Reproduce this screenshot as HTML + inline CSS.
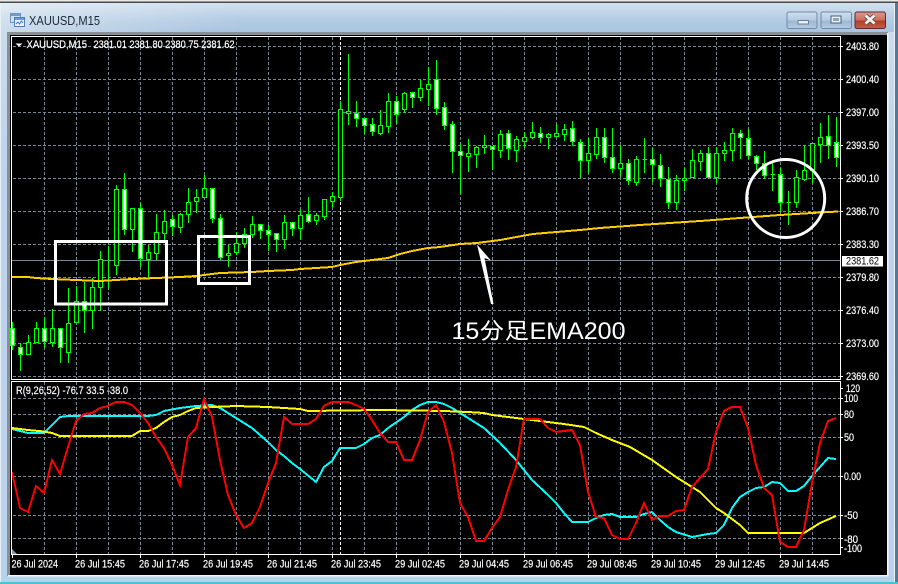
<!DOCTYPE html>
<html lang="ja">
<head>
<meta charset="utf-8">
<title>XAUUSD,M15</title>
<style>
html,body{margin:0;padding:0;width:898px;height:584px;overflow:hidden;background:#b9d2ec}
svg{display:block;position:absolute;left:0;top:0}
.t{font-family:"Liberation Sans",sans-serif;font-size:11px;fill:#fff;stroke:#fff;stroke-width:.2}
</style>
</head>
<body>
<svg width="898" height="584" viewBox="0 0 898 584" xmlns="http://www.w3.org/2000/svg">
<defs>
<linearGradient id="tb" x1="0" y1="0" x2="0" y2="1"><stop offset="0" stop-color="#d3e2f0"/><stop offset=".55" stop-color="#b6cde4"/><stop offset="1" stop-color="#a9c4df"/></linearGradient>
<linearGradient id="tl" x1="0" y1="0" x2="1" y2="0"><stop offset="0" stop-color="#fff" stop-opacity=".4"/><stop offset="1" stop-color="#fff" stop-opacity="0"/></linearGradient>
<linearGradient id="lf" x1="0" y1="0" x2="0" y2="1"><stop offset="0" stop-color="#cfdeee"/><stop offset=".3" stop-color="#bcd3eb"/><stop offset="1" stop-color="#b9d2ec"/></linearGradient>
<linearGradient id="bn" x1="0" y1="0" x2="0" y2="1"><stop offset="0" stop-color="#cfdff0"/><stop offset=".5" stop-color="#b3cae1"/><stop offset=".55" stop-color="#9db7d2"/><stop offset="1" stop-color="#b5cde3"/></linearGradient>
<linearGradient id="bc" x1="0" y1="0" x2="0" y2="1"><stop offset="0" stop-color="#dd9a8c"/><stop offset=".48" stop-color="#c9705e"/><stop offset=".55" stop-color="#b43c28"/><stop offset="1" stop-color="#c8604a"/></linearGradient>
</defs>

<!-- window frame -->
<rect width="898" height="584" fill="url(#lf)"/>
<rect x="0" y="2" width="898" height="30" fill="url(#tb)"/>
<rect x="0" y="2" width="240" height="30" fill="url(#tl)"/>
<rect x="0" y="0" width="898" height="2" fill="#e8e8e8"/>
<rect x="0" y="1.500" width="898" height="1.500" fill="#4a4a4a"/>
<rect x="0" y="3" width="1" height="581" fill="#e6eef6"/>
<rect x="895" y="3" width="3" height="581" fill="#5d7690"/>
<rect x="894" y="3" width="1" height="581" fill="#e8f0f8"/>
<rect x="0" y="582" width="898" height="2" fill="#4fbfd8"/>

<!-- title -->
<g>
<rect x="10.500" y="13.500" width="10" height="9" fill="#cfe0f2" stroke="#6f93bd"/>
<rect x="14.500" y="17.500" width="10" height="9" fill="#eaf3fb" stroke="#4e7fb8"/>
<rect x="11" y="14" width="9" height="2" fill="#6f9ad0"/>
<rect x="15" y="18" width="9" height="2" fill="#6f9ad0"/>
<path d="M16 24l2-2 1.500 2 2-3 1.500 2" fill="none" stroke="#3f78b8"/>
</g>
<text x="29" y="25" font-family="'Liberation Sans',sans-serif" font-size="12.500" fill="#1c2a38" textLength="71" lengthAdjust="spacingAndGlyphs">XAUUSD,M15</text>

<!-- window buttons -->
<rect x="787" y="12" width="30" height="16.500" rx="2" fill="url(#bn)" stroke="#7189a4"/>
<rect x="798" y="20.500" width="10.500" height="3.500" fill="#e9eff5" stroke="#6a7f96"/>
<rect x="821" y="12" width="30.500" height="16.500" rx="2" fill="url(#bn)" stroke="#7189a4"/>
<rect x="831" y="16" width="10" height="7" fill="#e9eff5" stroke="#4d6178"/>
<rect x="833" y="18" width="6" height="3" fill="#8ea7c0"/>
<rect x="855" y="12" width="30.500" height="16.500" rx="2" fill="url(#bc)" stroke="#5b2a35"/>
<path d="M865.500 15.500l9 8M874.500 15.500l-9 8" stroke="#5a4a48" stroke-width="4.500" fill="none"/>
<path d="M865.500 15.500l9 8M874.500 15.500l-9 8" stroke="#f3f1ef" stroke-width="2.800" fill="none"/>

<!-- client -->
<rect x="7" y="32" width="881" height="544" fill="#8a8f95"/>
<rect x="10" y="35" width="877" height="540" fill="#000"/>
<rect x="8" y="575" width="880" height="1.500" fill="#f2f6fa"/>
<rect x="887" y="33" width="1.500" height="543" fill="#f2f6fa"/>

<!-- grid -->
<path shape-rendering="crispEdges" stroke="#778899" stroke-width="1" stroke-dasharray="3 2" fill="none" d="M13 46.500H840M13 79.500H840M13 112.500H840M13 145.500H840M13 178.500H840M13 211.500H840M13 244.500H840M13 277.500H840M13 310.500H840M13 343.500H840M13 376.500H840M13 398.500H840M13 414.500H840M13 437.500H840M13 476.500H840M13 515.500H840M13 538.500H840
M44.500 37V379M76.500 37V379M108.500 37V379M140.500 37V379M172.500 37V379M204.500 37V379M236.500 37V379M268.500 37V379M300.500 37V379M332.500 37V379M364.500 37V379M396.500 37V379M428.500 37V379M460.500 37V379M492.500 37V379M524.500 37V379M556.500 37V379M588.500 37V379M620.500 37V379M652.500 37V379M684.500 37V379M716.500 37V379M748.500 37V379M780.500 37V379M812.500 37V379
M44.500 382V554M76.500 382V554M108.500 382V554M140.500 382V554M172.500 382V554M204.500 382V554M236.500 382V554M268.500 382V554M300.500 382V554M332.500 382V554M364.500 382V554M396.500 382V554M428.500 382V554M460.500 382V554M492.500 382V554M524.500 382V554M556.500 382V554M588.500 382V554M620.500 382V554M652.500 382V554M684.500 382V554M716.500 382V554M748.500 382V554M780.500 382V554M812.500 382V554"/>
<path shape-rendering="crispEdges" stroke="#fff" stroke-width="1" stroke-dasharray="3 2" fill="none" d="M340.500 37V379M340.500 382V554"/>

<!-- current price line -->
<path shape-rendering="crispEdges" stroke="#778899" d="M12 260.500H840" fill="none"/>

<!-- wicks -->
<path shape-rendering="crispEdges" stroke="#0f0" stroke-width="1" fill="none" d="M12.500 322V350M20.500 343V371M28.500 335V354M36.500 322V342M44.500 317V348M52.500 309V347M60.500 328V363M68.500 288V363M76.500 286V323M84.500 282V333M92.500 278V329M100.500 251V311M108.500 246V289M116.500 185V275M124.500 173V235M132.500 208V252M140.500 203V267M148.500 245V277M156.500 214V260M164.500 210V242M172.500 215V236M180.500 213V233M188.500 188V223M196.500 189V213M204.500 175V197M212.500 188V223M220.500 214V260M228.500 245V267M236.500 232V255M244.500 228V248M252.500 216V238M260.500 224V239M268.500 225V251M276.500 233V252M284.500 215V249M292.500 222V236M300.500 209V240M308.500 197V223M316.500 213V225M324.500 199V220M332.500 192V207M340.500 101V201M348.500 54V125M356.500 101V127M364.500 118V134M372.500 118V136M380.500 110V135M388.500 93V133M396.500 96V124M404.500 92V113M412.500 92V108M420.500 80V101M428.500 67V106M436.500 60V115M444.500 102V130M452.500 121V173M460.500 143V194M468.500 139V172M476.500 146V168M484.500 135V154M492.500 146V170M500.500 130V158M508.500 130V160M516.500 136V162M524.500 132V148M532.500 122V139M540.500 127V143M548.500 133V149M556.500 124V137M564.500 124V141M572.500 121V146M580.500 139V178M588.500 138V173M596.500 128V159M604.500 128V163M612.500 128V173M620.500 145V177M628.500 159V185M636.500 156V186M644.500 138V173M652.500 148V182M660.500 154V187M668.500 167V209M676.500 175V210M684.500 168V191M692.500 149V177M700.500 150V171M708.500 147V177M716.500 147V183M724.500 142V161M732.500 128V161M740.500 130V159M748.500 129V159M756.500 155V170M764.500 151V179M772.500 163V191M780.500 168V212M788.500 191V225M796.500 170V208M804.500 145V181M812.500 143V183M820.500 123V163M828.500 115V159M836.500 117V167
M106.500 280.500H111M642.500 159.500H647M770.500 174.500H775M786.500 202.500H791"/>

<!-- hollow (up) bodies -->
<path shape-rendering="crispEdges" stroke="#0f0" stroke-width="1" fill="#000" d="M26.500 342.500h4v12h-4zM34.500 328.500h4v14h-4zM50.500 328.500h4v14h-4zM66.500 323.500h4v29h-4zM74.500 301.500h4v21h-4zM90.500 287.500h4v23h-4zM98.500 259.500h4v28h-4zM114.500 189.500h4v76h-4zM130.500 208.500h4v21h-4zM146.500 252.500h4v7h-4zM154.500 232.500h4v21h-4zM162.500 221.500h4v12h-4zM178.500 214.500h4v13h-4zM186.500 202.500h4v12h-4zM194.500 197.500h4v4h-4zM202.500 188.500h4v9h-4zM226.500 253.500h4v2h-4zM234.500 243.500h4v9h-4zM242.500 234.500h4v9h-4zM250.500 224.500h4v10h-4zM282.500 222.500h4v17h-4zM298.500 215.500h4v13h-4zM314.500 215.500h4v5h-4zM322.500 199.500h4v17h-4zM330.500 196.500h4v5h-4zM338.500 109.500h4v88h-4zM346.500 111.500h4v2h-4zM378.500 125.500h4v8h-4zM386.500 101.500h4v25h-4zM402.500 93.500h4v16h-4zM418.500 88.500h4v9h-4zM426.500 84.500h4v5h-4zM466.500 153.500h4v3h-4zM474.500 147.500h4v7h-4zM482.500 145.500h4v2h-4zM498.500 134.500h4v16h-4zM514.500 139.500h4v11h-4zM522.500 137.500h4v4h-4zM530.500 132.500h4v5h-4zM546.500 134.500h4v3h-4zM554.500 133.500h4v3h-4zM562.500 129.500h4v5h-4zM586.500 153.500h4v7h-4zM594.500 137.500h4v17h-4zM618.500 163.500h4v5h-4zM634.500 159.500h4v23h-4zM674.500 180.500h4v22h-4zM682.500 178.500h4v2h-4zM690.500 160.500h4v17h-4zM698.500 153.500h4v8h-4zM714.500 153.500h4v24h-4zM722.500 150.500h4v3h-4zM730.500 133.500h4v17h-4zM794.500 177.500h4v25h-4zM802.500 170.500h4v9h-4zM810.500 143.500h4v27h-4zM818.500 137.500h4v7h-4z"/>

<!-- filled (down) bodies -->
<path shape-rendering="crispEdges" stroke="#0f0" stroke-width="1" fill="#fff" d="M10.500 328.500h4v17h-4zM18.500 347.500h4v7h-4zM42.500 328.500h4v13h-4zM58.500 328.500h4v19h-4zM82.500 301.500h4v9h-4zM122.500 189.500h4v40h-4zM138.500 208.500h4v50h-4zM170.500 219.500h4v7h-4zM210.500 188.500h4v30h-4zM218.500 218.500h4v39h-4zM258.500 224.500h4v6h-4zM266.500 230.500h4v4h-4zM274.500 233.500h4v6h-4zM290.500 222.500h4v6h-4zM306.500 214.500h4v7h-4zM354.500 113.500h4v5h-4zM362.500 118.500h4v7h-4zM370.500 124.500h4v7h-4zM394.500 101.500h4v13h-4zM410.500 92.500h4v5h-4zM434.500 79.500h4v29h-4zM442.500 107.500h4v18h-4zM450.500 124.500h4v27h-4zM458.500 151.500h4v4h-4zM490.500 146.500h4v3h-4zM506.500 133.500h4v15h-4zM538.500 133.500h4v4h-4zM570.500 128.500h4v13h-4zM578.500 142.500h4v18h-4zM602.500 137.500h4v20h-4zM610.500 157.500h4v11h-4zM626.500 163.500h4v17h-4zM650.500 159.500h4v5h-4zM658.500 165.500h4v13h-4zM666.500 179.500h4v23h-4zM706.500 153.500h4v24h-4zM738.500 133.500h4v4h-4zM746.500 138.500h4v17h-4zM754.500 156.500h4v7h-4zM762.500 163.500h4v12h-4zM778.500 174.500h4v28h-4zM826.500 136.500h4v9h-4zM834.500 142.500h4v15h-4z"/>

<!-- EMA200 -->
<polyline shape-rendering="crispEdges" fill="none" stroke="#ffcc00" stroke-width="2" points="12,277 28,277 36,278 52,279 76,280 100,281 116,280 132,279 156,278 180,277 196,276 204,275 220,273 252,272 268,271 292,270 300,269 316,268 332,267 340,265 356,262 372,260 388,258 400,254 412,251 428,248 440,247 460,244 477,243 500,240 533,234 580,230 600,228 640,225 700,221 740,218 780,215 820,212.500 838,211.500"/>

<!-- indicator lines -->
<polyline shape-rendering="crispEdges" fill="none" stroke="#00ffff" stroke-width="2" points="12,429 20,431 28,433 44,433 52,425 60,417 68,416 76,416 148,416 156,415 164,411 180,408 196,406 212,405 220,408 228,413 236,418 244,423 252,428 260,435 268,442 276,450 284,456 292,463 300,469 316,482 324,467 332,461 340,448 356,448 364,444 372,438 380,435 388,428 404,417 412,410 420,405 428,402 436,402 444,404 452,408 468,418 484,428 500,443 516,460 532,480 548,495 556,503 564,513 572,522 588,522 596,518 604,515 612,514 620,517 636,517 644,514 652,512 660,520 668,527 676,532 692,537 708,534 716,533 724,525 732,508 740,497 748,492 756,488 764,487 772,482 780,483 788,491 796,491 804,486 812,476 820,467 828,458 836,459"/>
<polyline shape-rendering="crispEdges" fill="none" stroke="#ffff00" stroke-width="2" points="12,428 28,430 44,431.500 52,433 60,436 132,436 140,431 148,431 156,428 164,422 172,417 180,415 188,411 196,408 212,407 236,406 268,407 284,408 300,409 308,411 380,410 444,411 468,412 484,413 492,415 516,418 532,420 548,422 564,424 584,427 596,433 612,440 630,447 652,460 676,477 700,492 716,508 724,513 732,519 740,525 748,533 804,533 812,528 820,523 836,516"/>
<polyline shape-rendering="crispEdges" fill="none" stroke="#ff0000" stroke-width="2" points="12,472 20,508 28,512 36,486 44,493 52,460 60,474 68,447 76,421 84,414 92,413 100,408 108,406 116,402 124,402 132,405 140,413 148,423 156,437 164,448 172,465 180,485 188,437 196,428 204,399 212,417 220,460 228,495 236,515 244,528 252,523 260,507 268,483 276,463 284,417 292,424 308,424 316,419 324,406 332,402 348,402 356,405 364,409 372,420 380,433 388,442 396,442 404,460 412,460 420,440 428,412 436,405 444,422 452,453 460,503 468,517 476,541 484,541 492,528 500,517 508,490 516,467 524,419 540,419 548,428 556,432 564,431 572,430 580,445 588,492 596,517 604,518 612,535 620,539 628,539 636,523 644,503 652,520 660,516 668,516 676,511 684,510 692,487 700,478 708,469 716,432 724,411 732,407 740,407 748,428 756,465 764,488 772,495 780,542 788,547 796,547 804,530 812,483 820,443 828,421 836,418"/>

<!-- chart borders -->
<path shape-rendering="crispEdges" stroke="#fff" fill="none" d="M840.500 36.500H11.500V379.500H840.500ZM11.500 381.500H840.500V554.500H11.500ZM840 46.500H843M840 79.500H843M840 112.500H843M840 145.500H843M840 178.500H843M840 211.500H843M840 244.500H843M840 277.500H843M840 310.500H843M840 343.500H843M840 376.500H843M840 388.500H843M840 398.500H843M840 414.500H843M840 437.500H843M840 476.500H843M840 515.500H843M840 538.500H843M840 547.500H843M12.500 554V558M76.500 554V558M140.500 554V558M204.500 554V558M268.500 554V558M332.500 554V558M396.500 554V558M460.500 554V558M524.500 554V558M588.500 554V558M652.500 554V558M716.500 554V558M780.500 554V558"/>
<path d="M12 549l5 5h-5z" fill="#8a97a5"/>

<!-- header text -->
<path d="M15.500 43.500h7l-3.500 3z" fill="#fff"/>
<text class="t" x="26.500" y="48" textLength="60.500" lengthAdjust="spacingAndGlyphs">XAUUSD,M15</text>
<text class="t" x="93.500" y="48" textLength="141" lengthAdjust="spacingAndGlyphs">2381.01 2381.80 2380.75 2381.62</text>
<text class="t" x="16" y="394" textLength="112" lengthAdjust="spacingAndGlyphs">R(9,26,52) -76.7 33.5 -38.0</text>

<!-- price scale -->
<text class="t" x="846" y="50" textLength="33" lengthAdjust="spacingAndGlyphs">2403.80</text>
<text class="t" x="846" y="83" textLength="33" lengthAdjust="spacingAndGlyphs">2400.40</text>
<text class="t" x="846" y="116" textLength="33" lengthAdjust="spacingAndGlyphs">2397.00</text>
<text class="t" x="846" y="149" textLength="33" lengthAdjust="spacingAndGlyphs">2393.50</text>
<text class="t" x="846" y="182" textLength="33" lengthAdjust="spacingAndGlyphs">2390.10</text>
<text class="t" x="846" y="215" textLength="33" lengthAdjust="spacingAndGlyphs">2386.70</text>
<text class="t" x="846" y="248" textLength="33" lengthAdjust="spacingAndGlyphs">2383.30</text>
<rect x="842" y="256" width="41" height="10.500" fill="#fff"/>
<text x="846" y="264.500" font-family="'Liberation Sans',sans-serif" font-size="11" fill="#000" textLength="33" lengthAdjust="spacingAndGlyphs">2381.62</text>
<text class="t" x="846" y="281" textLength="33" lengthAdjust="spacingAndGlyphs">2379.80</text>
<text class="t" x="846" y="314" textLength="33" lengthAdjust="spacingAndGlyphs">2376.40</text>
<text class="t" x="846" y="347" textLength="33" lengthAdjust="spacingAndGlyphs">2373.00</text>
<text class="t" x="846" y="380" textLength="33" lengthAdjust="spacingAndGlyphs">2369.60</text>

<!-- indicator scale -->
<text class="t" x="846" y="392" textLength="14" lengthAdjust="spacingAndGlyphs">120</text>
<text class="t" x="844" y="402" textLength="14" lengthAdjust="spacingAndGlyphs">100</text>
<text class="t" x="844" y="418" textLength="10" lengthAdjust="spacingAndGlyphs">80</text>
<text class="t" x="844" y="441" textLength="10" lengthAdjust="spacingAndGlyphs">50</text>
<text class="t" x="844" y="480" textLength="17" lengthAdjust="spacingAndGlyphs">0.00</text>
<text class="t" x="844" y="519" textLength="14" lengthAdjust="spacingAndGlyphs">-50</text>
<text class="t" x="844" y="543" textLength="14" lengthAdjust="spacingAndGlyphs">-80</text>
<text class="t" x="844" y="552" textLength="18" lengthAdjust="spacingAndGlyphs">-100</text>

<!-- time axis -->
<text class="t" x="11.500" y="567.500" textLength="46.500" lengthAdjust="spacingAndGlyphs">26 Jul 2024</text>
<text class="t" x="75" y="567.500" textLength="50" lengthAdjust="spacingAndGlyphs">26 Jul 15:45</text>
<text class="t" x="139" y="567.500" textLength="50" lengthAdjust="spacingAndGlyphs">26 Jul 17:45</text>
<text class="t" x="203" y="567.500" textLength="50" lengthAdjust="spacingAndGlyphs">26 Jul 19:45</text>
<text class="t" x="267" y="567.500" textLength="50" lengthAdjust="spacingAndGlyphs">26 Jul 21:45</text>
<text class="t" x="331" y="567.500" textLength="50" lengthAdjust="spacingAndGlyphs">26 Jul 23:45</text>
<text class="t" x="395" y="567.500" textLength="50" lengthAdjust="spacingAndGlyphs">29 Jul 02:45</text>
<text class="t" x="459" y="567.500" textLength="50" lengthAdjust="spacingAndGlyphs">29 Jul 04:45</text>
<text class="t" x="523" y="567.500" textLength="50" lengthAdjust="spacingAndGlyphs">29 Jul 06:45</text>
<text class="t" x="587" y="567.500" textLength="50" lengthAdjust="spacingAndGlyphs">29 Jul 08:45</text>
<text class="t" x="651" y="567.500" textLength="50" lengthAdjust="spacingAndGlyphs">29 Jul 10:45</text>
<text class="t" x="715" y="567.500" textLength="50" lengthAdjust="spacingAndGlyphs">29 Jul 12:45</text>
<text class="t" x="779" y="567.500" textLength="50" lengthAdjust="spacingAndGlyphs">29 Jul 14:45</text>

<!-- annotations -->
<rect x="55.500" y="241.500" width="111" height="62.500" fill="none" stroke="#fff" stroke-width="3" shape-rendering="crispEdges"/>
<rect x="198.500" y="236.500" width="51" height="47" fill="none" stroke="#fff" stroke-width="3" shape-rendering="crispEdges"/>
<circle cx="785.700" cy="198.500" r="39" fill="none" stroke="#fff" stroke-width="3"/>
<path d="M477 244.500L491 260.500L484.500 258L493.500 304L491 304Z" fill="#fff"/>
<text x="451.500" y="339" font-family="'Liberation Sans','IPAGothic','Noto Sans CJK JP',sans-serif" font-size="24" fill="#fff" textLength="174" lengthAdjust="spacingAndGlyphs">15分足EMA200</text>
</svg>
</body>
</html>
